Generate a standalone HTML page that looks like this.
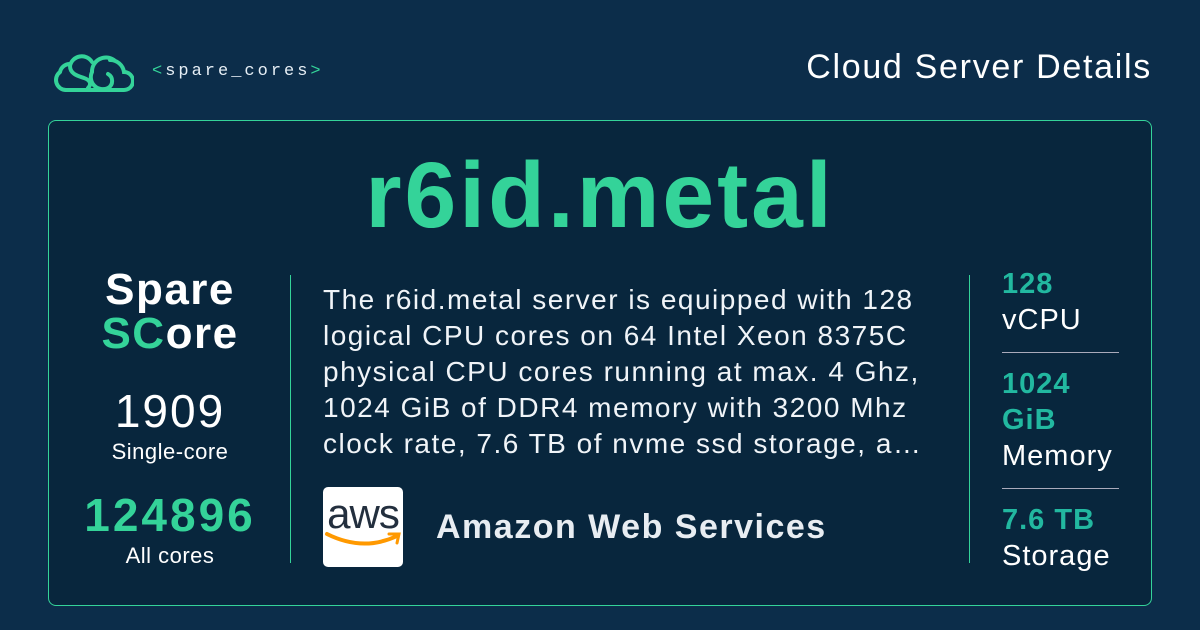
<!DOCTYPE html>
<html><head><meta charset="utf-8"><style>
*{margin:0;padding:0;box-sizing:border-box}
body{width:1200px;height:630px;background:#0c2d4a;font-family:"Liberation Sans",sans-serif;color:#fff;position:relative;overflow:hidden}
.abs{position:absolute}
.card{left:48px;top:120px;width:1104px;height:486px;border:1px solid #34d399;border-radius:8px;background:#08263d}
.g{color:#34d399}
.t{color:#22b8a0}
.desc div{white-space:nowrap}
</style></head><body>
<svg class="abs" style="left:52px;top:52px" width="82" height="42" viewBox="0 0 82 42" fill="none" stroke="#34d399" stroke-width="4" stroke-linecap="round">
<path d="M14 38 H72 a9 9 0 0 0 0-18 a14 14 0 0 0-14-12"/>
<path d="M14 38 a10 10 0 0 1-6-18 a10 10 0 0 1 10-8"/>
<path d="M40 10 a12 12 0 0 0-22 4 c0 8 8 10 14 12 c6 2 8 6 4 10"/>
<path d="M62 8 a14 14 0 0 0-22 12 a12 12 0 0 0 16 16 a8 8 0 0 0 0-14"/>
</svg>
<div class="abs" style="left:152px;top:62px;font-family:'Liberation Mono',monospace;font-size:17px;letter-spacing:3px;color:#e6eef5"><span class="g">&lt;</span>spare_cores<span class="g">&gt;</span></div>
<div class="abs" style="right:48px;top:48px;font-size:34px;letter-spacing:1.7px;color:#fff">Cloud Server Details</div>
<div class="abs card"></div>
<div class="abs g" style="left:0;width:1200px;top:142px;text-align:center;font-size:93px;font-weight:bold;letter-spacing:3px">r6id.metal</div>
<div class="abs" style="left:70px;width:200px;top:268px;text-align:center;font-size:44px;font-weight:bold;line-height:44px;letter-spacing:1.5px">Spare<br><span class="g">SC</span>ore</div>
<div class="abs" style="left:70px;width:200px;top:386px;text-align:center;font-size:46px;line-height:50px;letter-spacing:2px">1909</div>
<div class="abs" style="left:70px;width:200px;top:439px;text-align:center;font-size:22px;letter-spacing:0.5px">Single-core</div>
<div class="abs g" style="left:70px;width:200px;top:490px;text-align:center;font-size:46px;font-weight:bold;line-height:50px;letter-spacing:3px">124896</div>
<div class="abs" style="left:70px;width:200px;top:543px;text-align:center;font-size:22px;letter-spacing:0.5px">All cores</div>
<div class="abs" style="left:290px;top:275px;width:1px;height:288px;background:#34d399"></div>
<div class="abs" style="left:969px;top:275px;width:1px;height:288px;background:#34d399"></div>
<div class="abs desc" style="left:323px;top:282px;font-size:28px;letter-spacing:1.5px;line-height:36px;color:#f0f4f8">
<div>The r6id.metal server is equipped with 128</div>
<div>logical CPU cores on 64 Intel Xeon 8375C</div>
<div>physical CPU cores running at max. 4 Ghz,</div>
<div>1024 GiB of DDR4 memory with 3200 Mhz</div>
<div>clock rate, 7.6 TB of nvme ssd storage, a…</div>
</div>
<div class="abs" style="left:323px;top:487px;width:80px;height:80px;background:#fff;border-radius:5px"></div>
<div class="abs" style="left:323px;top:490px;width:80px;text-align:center;font-size:42px;color:#232f3e;letter-spacing:-1px">aws</div>
<svg class="abs" style="left:323px;top:528px" width="80" height="26" viewBox="0 0 80 26"><path d="M4 6 Q40 24 74 8" stroke="#f90" stroke-width="4" fill="none" stroke-linecap="round"/><path d="M66 6 L76 6 L74 15" stroke="#f90" stroke-width="3" fill="none" stroke-linecap="round"/></svg>
<div class="abs" style="left:436px;top:508px;font-size:34px;font-weight:bold;color:#e8edf2;letter-spacing:1.5px">Amazon Web Services</div>
<div class="abs" style="left:1002px;top:266px;font-size:29px;line-height:36px;letter-spacing:1px"><b class="t">128</b><br>vCPU</div>
<div class="abs" style="left:1002px;top:352px;width:117px;height:1px;background:#aab"></div>
<div class="abs" style="left:1002px;top:366px;font-size:29px;line-height:36px;letter-spacing:1px"><b class="t">1024<br>GiB</b><br>Memory</div>
<div class="abs" style="left:1002px;top:488px;width:117px;height:1px;background:#aab"></div>
<div class="abs" style="left:1002px;top:502px;font-size:29px;line-height:36px;letter-spacing:1px"><b class="t">7.6 TB</b><br>Storage</div>
</body></html>
